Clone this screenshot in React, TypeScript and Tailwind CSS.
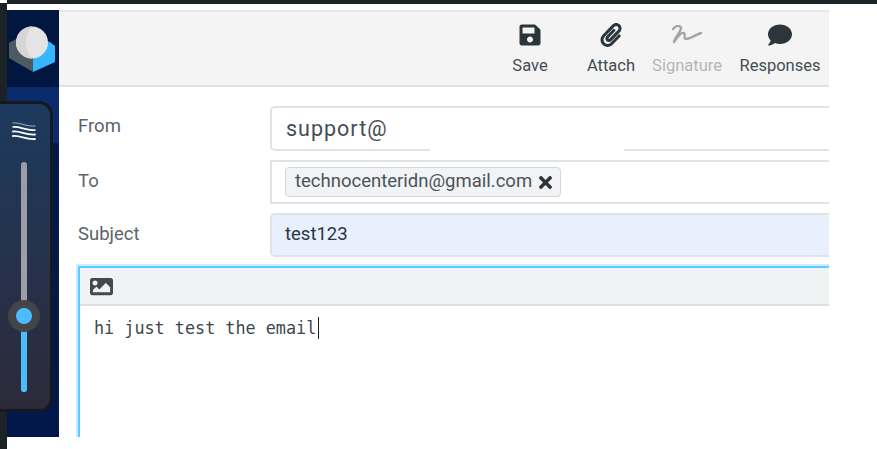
import { FaSave, FaPaperclip, FaComment, FaImage, FaTimes } from "react-icons/fa";

function Logo() {
  return (
    <svg width="48" height="47" viewBox="0 0 48 47">
      <path d="M1 17 L10 12 L25 12 L25 46 L1 32 Z" fill="#4d5a5f" />
      <path d="M25 12 L42 16 L47 20 L47 36 L25 46 Z" fill="#35b6ff" />
      <circle cx="24" cy="16.5" r="16" fill="#e4e4e4" />
      <path d="M24 0.5 A16 16 0 0 0 24 32.5 A24 24 0 0 1 24 0.5 Z" fill="#d6d6d6" />
    </svg>
  );
}

function Signature() {
  return (
    <svg width="30" height="20" viewBox="0 0 30 20" fill="none" stroke="#a2a5a7" strokeWidth="2.4" strokeLinecap="round" strokeLinejoin="round">
      <path d="M1 4 C4 0 8 0 9 3 C9 7 3 12 2 17 C6 11 10 7 12 8 C14 9 11 14 14 14 C18 14 23 10 29 8" />
    </svg>
  );
}

function Waves() {
  return (
    <svg width="24" height="20" viewBox="0 0 24 20" fill="none" stroke="#fff" strokeLinecap="round">
      <path d="M1 1 C8 0 14 5 23 4" strokeWidth="1" opacity="0.6" />
      <path d="M1 5 C8 4 14 9 23 8" strokeWidth="1.6" />
      <path d="M1 9.5 C8 8.5 14 13.5 23 12.5" strokeWidth="1.8" />
      <path d="M1 14 C8 13 14 18 23 17" strokeWidth="1.8" />
    </svg>
  );
}

function ToolButton({ label, icon, width, disabled }: { label: string; icon: React.ReactNode; width: string; disabled?: boolean }) {
  return (
    <div className={`flex flex-col items-center ${width} ${disabled ? "text-[#b0b3b6]" : "text-[#2c363a]"}`}>
      <div className="flex h-[24px] items-center text-[24px]">{icon}</div>
      <span className={`mt-[9px] whitespace-nowrap text-[16.5px] leading-[20px] ${disabled ? "text-[#b4b6b9]" : "text-[#444c52]"}`}>{label}</span>
    </div>
  );
}

function Row({ label, labelPad, children }: { label: string; labelPad: string; children: React.ReactNode }) {
  return (
    <div className="flex">
      <div className={`w-[192px] shrink-0 text-[18.5px] leading-[24px] text-[#5b646b] ${labelPad}`}>{label}</div>
      <div className="min-w-0 flex-1">{children}</div>
    </div>
  );
}

export default function App() {
  return (
    <div className="relative flex h-[449px] w-[877px] overflow-hidden bg-white font-['Roboto',sans-serif]">
      <div className="mt-[3px] w-[7px] shrink-0 bg-[#1c2326]" />
      <div className="flex min-w-0 flex-1 flex-col">
        <div className="h-[4px] shrink-0 bg-[#1c2326]" />
        <div className="mt-[6px] flex h-[427px] w-[822px]">
          <div className="flex w-[52px] shrink-0 flex-col bg-[#02184a]">
            <div className="h-[77px] bg-[#02173f] pl-[1px] pt-[16px]">
              <Logo />
            </div>
            <div className="h-[56px] bg-[#0b2c6c]" />
          </div>
          <div className="min-w-0 flex-1 overflow-hidden border-t-2 border-[#e4e6e8]">
            <div className="flex h-[75px] justify-end border-b-2 border-[#dde1e4] bg-[#f4f4f4] pt-[11px]">
              <ToolButton label="Save" icon={<FaSave />} width="w-[98px]" />
              <ToolButton label="Attach" icon={<FaPaperclip />} width="w-[64px]" />
              <ToolButton label="Signature" icon={<Signature />} width="w-[88px]" disabled />
              <ToolButton label="Responses" icon={<FaComment />} width="w-[98px]" />
            </div>
            <div className="flex flex-col gap-[9px] pl-[19px] pt-[19px]">
              <Row label="From" labelPad="pt-[8px]">
                <div className="relative flex h-[45px] items-center rounded-l-[5px] border-2 border-r-0 border-[#dfe3e7] pl-[14px] pt-[2px] text-[21.5px] tracking-[1px] text-[#454d54]">
                  support@
                  <div className="absolute bottom-[-2px] left-[158px] h-[2px] w-[194px] bg-white" />
                </div>
              </Row>
              <Row label="To" labelPad="pt-[9px]">
                <div className="flex h-[44px] items-center border-2 border-r-0 border-[#dfe3e7] pl-[13px]">
                  <div className="flex h-[30px] items-center gap-[4px] rounded-[4px] border border-[#d3d7db] bg-[#f1f3f5] pl-[9px] pr-[5px] text-[18.5px] text-[#4a5359]">
                    technocenteridn@gmail.com
                    <FaTimes className="text-[19px] text-[#2c363a]" />
                  </div>
                </div>
              </Row>
              <Row label="Subject" labelPad="pt-[9px]">
                <div className="flex h-[44px] items-center rounded-l-[5px] border-2 border-r-0 border-[#dfe3e7] bg-[#e8f0fe] pl-[13px] text-[18.5px] text-[#2a3640]">
                  test123
                </div>
              </Row>
            </div>
            <div className="ml-[19px] mt-[9px] h-[173px] border-2 border-r-0 border-[#5ccbff] shadow-[0_0_0_2px_#c9eeff]">
              <div className="flex h-[38px] items-center border-b-2 border-[#dde1e4] bg-[#f1f2f4] pl-[10px] text-[23px] text-[#45494c]">
                <FaImage />
              </div>
              <div className="flex pl-[14px] pt-[11px] font-['DejaVu_Sans_Mono',monospace] text-[16.8px] leading-[22px] text-[#3d464e]">
                hi just test the email
                <span className="ml-[2px] h-[22px] w-[1px] bg-[#222]" />
              </div>
            </div>
          </div>
        </div>
      </div>

      <div className="absolute left-[-12px] top-[101px] flex h-[311px] w-[65px] flex-col items-center rounded-[14px] border-[3px] border-[#15181f] bg-gradient-to-b from-[#1c3a5e] to-[#2b2a3a] pl-[6px]">
        <div className="mt-[18px]">
          <Waves />
        </div>
        <div className="relative mt-[20px] h-[230px] w-[6px] rounded-full bg-[#9c9da6]">
          <div className="absolute bottom-0 h-[63px] w-full rounded-b-full bg-[#4dbcff]" />
          <div className="absolute left-[-13px] top-[138px] flex h-[32px] w-[32px] items-center justify-center rounded-full bg-[#444548]">
            <div className="h-[16px] w-[16px] rounded-full bg-[#4dbcff]" />
          </div>
        </div>
      </div>
    </div>
  );
}
